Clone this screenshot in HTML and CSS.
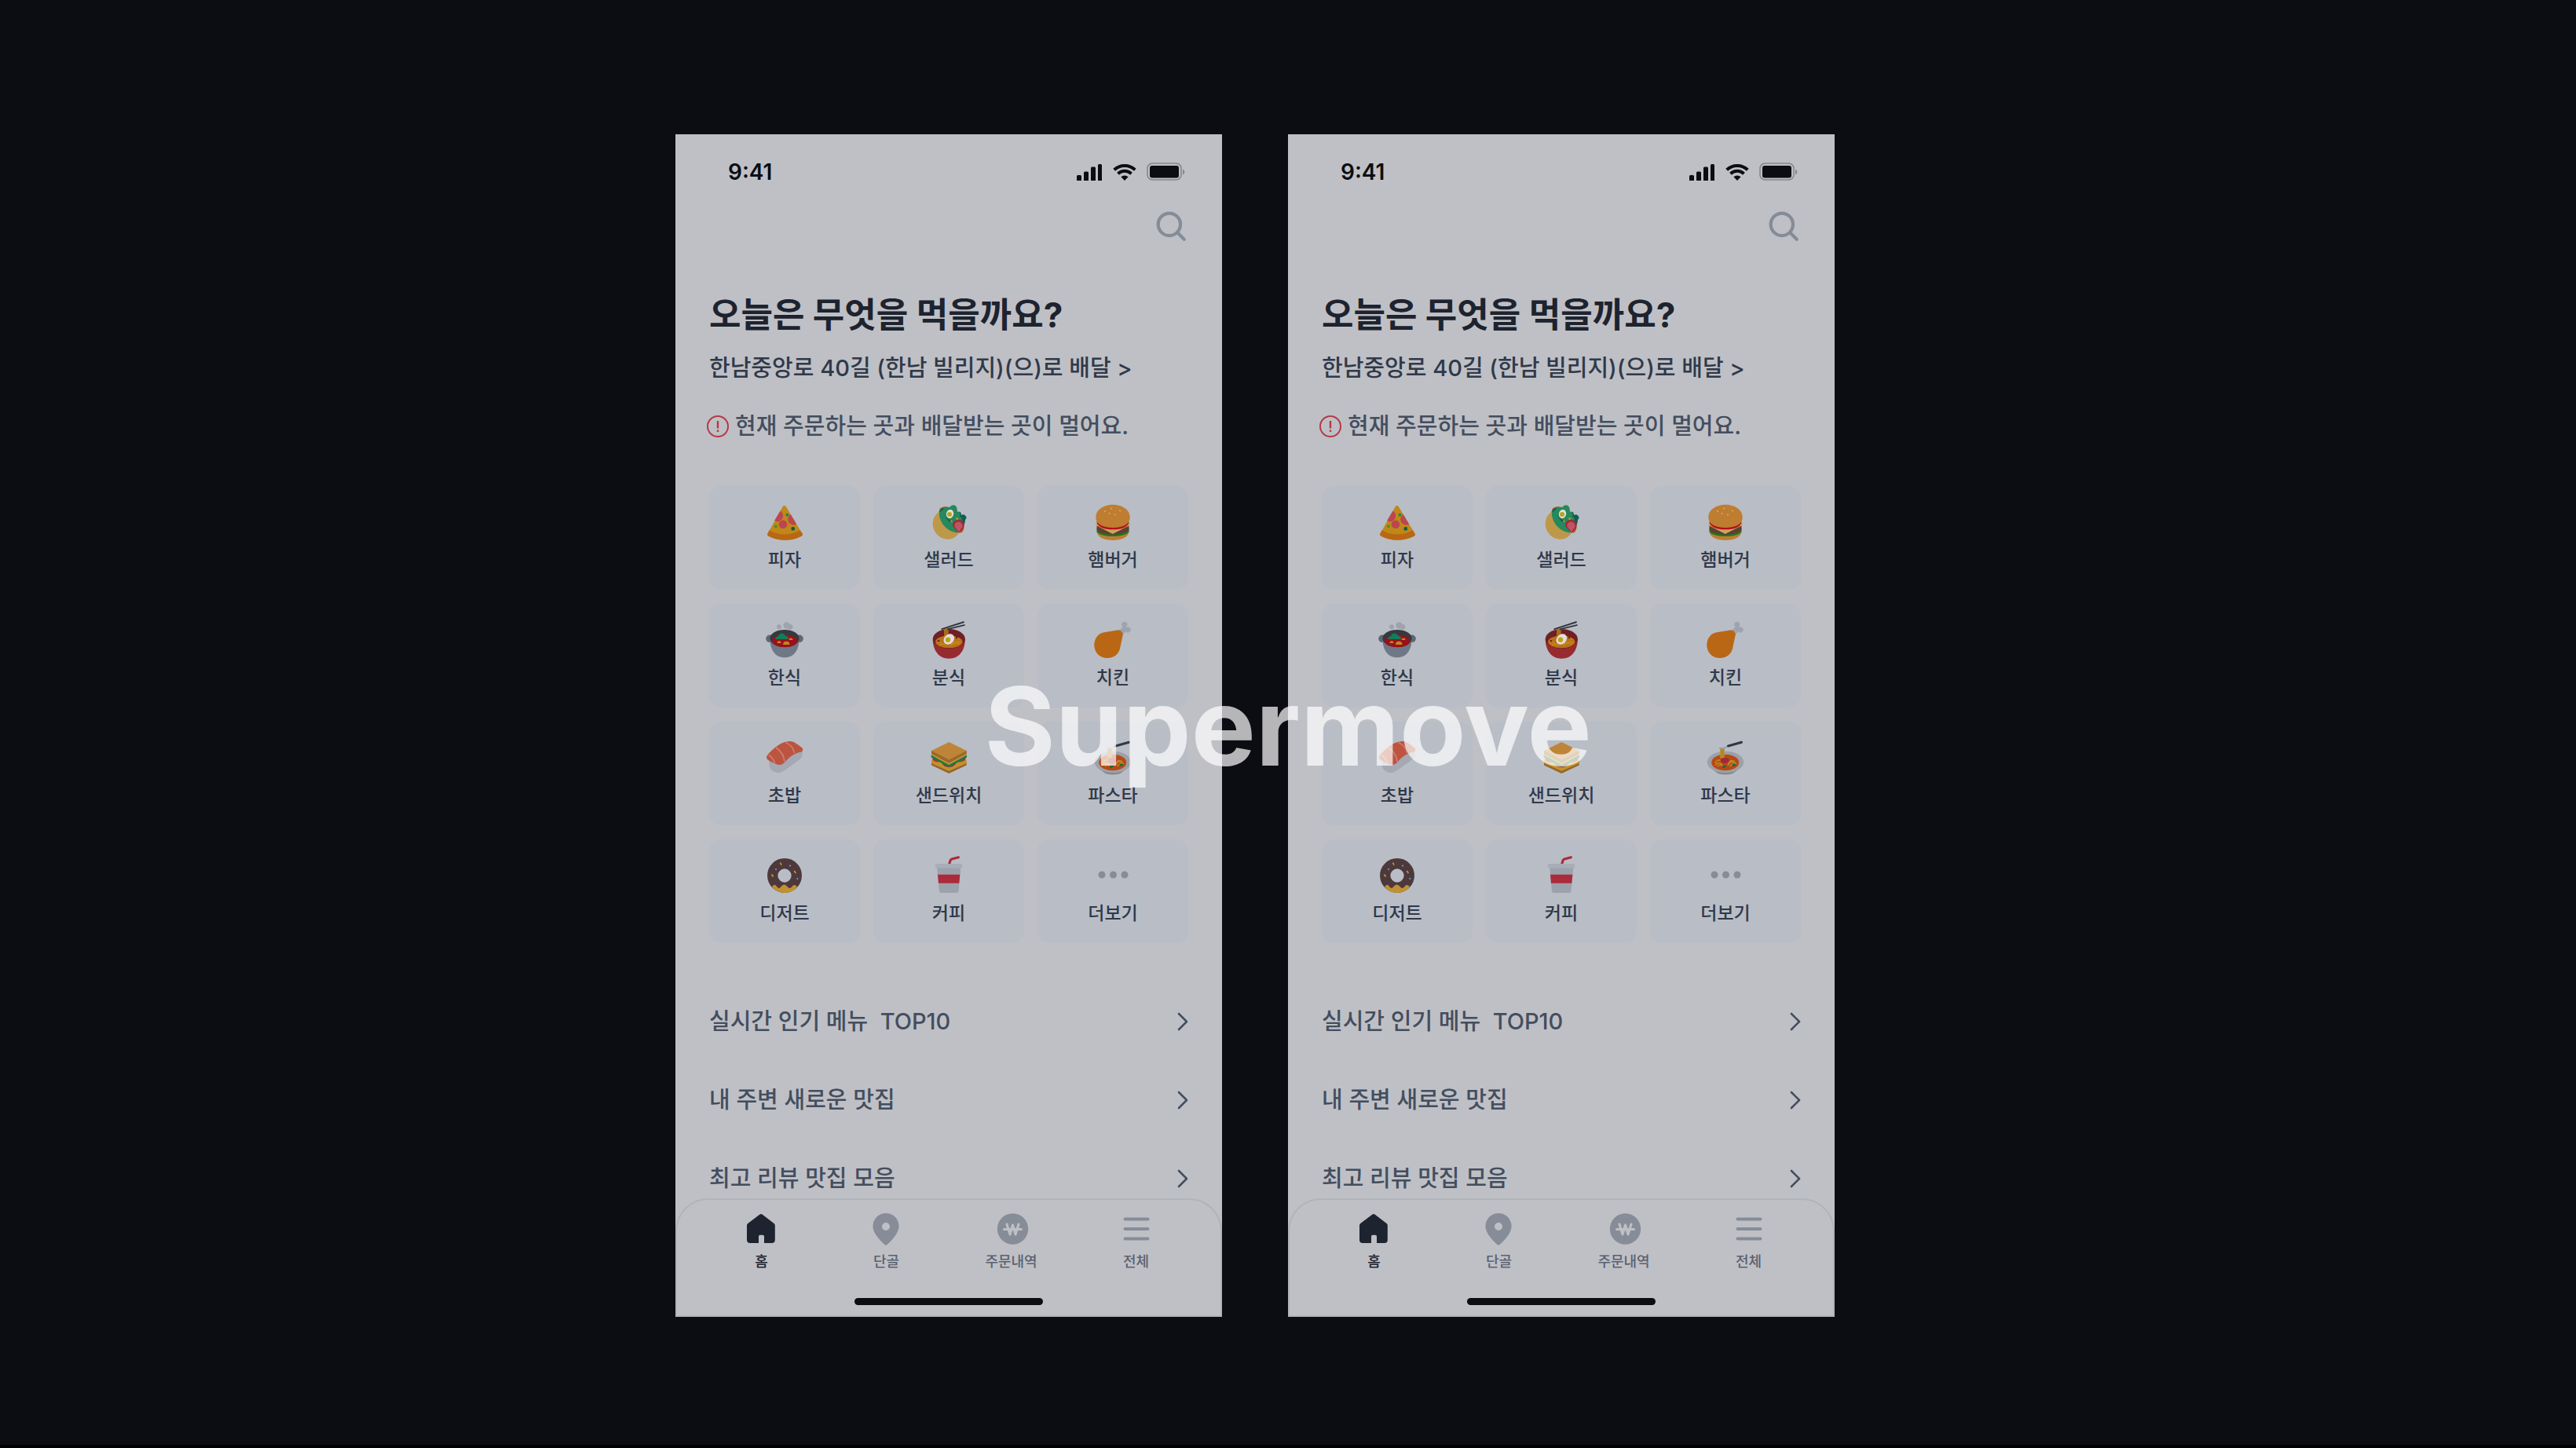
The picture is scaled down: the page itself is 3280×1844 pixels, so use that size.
FILE: index.html
```html
<!DOCTYPE html>
<html lang="ko">
<head>
<meta charset="utf-8">
<meta name="viewport" content="width=device-width, initial-scale=1">
<title>Supermove</title>
<link rel="stylesheet" href="styles.css">
</head>
<body>
<svg class="sprite" aria-hidden="true">
  <symbol id="i-signal" viewBox="0 0 33 22"><path d="M0 16.500a1.500 1.500 0 0 1 1.500-1.500h3a1.500 1.500 0 0 1 1.500 1.500v5.500h-6zM9 12a1.500 1.500 0 0 1 1.500-1.500h3A1.500 1.500 0 0 1 15 12v10H9zM18 6a1.500 1.500 0 0 1 1.500-1.500h3A1.500 1.500 0 0 1 24 6v16h-6zM27 2.500A1.500 1.500 0 0 1 28.500 1h2A1.500 1.500 0 0 1 32 2.500V22h-5z"/></symbol>
  <symbol id="i-wifi" viewBox="0 0 30 22"><path d="M15 22l-4.600-4.700a7 7 0 0 1 9.200 0z"/><path d="M6.500 13.200a12.500 12.500 0 0 1 17 0M1.700 8.200a19.500 19.500 0 0 1 26.600 0" fill="none" stroke="currentColor" stroke-width="4"/></symbol>
  <symbol id="i-battery" viewBox="0 0 50 24"><rect x="1" y="1" width="43" height="21" rx="6.500" fill="none" stroke="#85878c" stroke-width="1.600"/><rect x="4" y="4" width="37" height="15.500" rx="3"/><path d="M46 8.500v7c3-1.200 3-5.800 0-7z" fill="#85878c"/></symbol>
  <symbol id="i-search" viewBox="0 0 40 40"><g fill="none" stroke="currentColor" stroke-width="4" stroke-linecap="round"><circle cx="17" cy="17" r="13.500"/><path d="M27 27l8 8"/></g></symbol>
  <symbol id="i-alert" viewBox="0 0 30 30"><circle cx="15" cy="15" r="13" fill="none" stroke="currentColor" stroke-width="2"/><path d="M13.800 8h2.400v9.500h-2.400zM13.800 19.500h2.400V22h-2.400z"/></symbol>
  <symbol id="i-chevron" viewBox="0 0 14 24"><path d="M2 2l10 10L2 22" fill="none" stroke="currentColor" stroke-width="2.600" stroke-linecap="round" stroke-linejoin="round"/></symbol>

  <symbol id="f-pizza" viewBox="0 0 48 48">
    <path d="M21.500 3.500c1-2 3.500-2 4.500 0L46.500 37.500c.8 1.400.3 2.600-1 3.200-13 6.700-29 6.700-42 0-1.300-.6-1.800-1.800-1-3.200z" fill="#bf8818"/>
    <path d="M14.700 14.900l3.900-6.400a5.300 5.300 0 0 1-7.500 12.600zM31.700 13a5.500 5.500 0 0 0 7.500 12.500z" fill="#bb4650"/><circle cx="22" cy="25.700" r="5.300" fill="#bb4650"/>
    <path d="M4.400 33.300c12 7 27.500 7 39.400 0l2.700 4.200c.8 1.400.3 2.600-1 3.200-13 6.700-29 6.700-42 0-1.300-.6-1.800-1.800-1-3.200z" fill="#b96714"/>
    <rect x="25.500" y="11.700" width="3.800" height="3.800" rx="1.500" fill="#25805a"/><rect x="11" y="26.500" width="3.600" height="3.600" rx="1" fill="#4f8f2a"/><rect x="32.500" y="29" width="4.500" height="4.500" rx="1.500" fill="#125a4c"/>
  </symbol>
  <symbol id="f-salad" viewBox="0 0 48 48">
    <path d="M12 6q4-3.500 9-3l22.500 27q-.5 5-4 7z" fill="#b96714"/>
    <path d="M11.500 10c1-4 6-6.500 9-5l-1 14zM36 10q4-1 4 4 3-1.500 5 .500 3 2.500 0 5.500 0 5-3 8l-9-6-2-12z" fill="#145c50"/>
    <path d="M11.500 10q5-1 7-6 4-1 7 0c2-4.500 9-3.500 9 2q1 2 0 3.500 4-.5 4 3.500l-.500 3q4 1 2.500 6l3 4-9 11q-10 1-18-7.500-6-7-5-19.500z" fill="#26885c"/>
    <path d="M19 15l6 5h5l-5 3z" fill="#145c50"/>
    <path d="M11.500 10c.5 14 10 25 25.500 27-4 5-8 7.700-13.500 7.700C12 44.700 3.700 35.500 3.700 24.700c0-6 3-11.500 7.800-14.700z" fill="#be9849"/>
    <ellipse cx="25.500" cy="12.500" rx="4.600" ry="5.600" transform="rotate(15 25.500 12.500)" fill="#dfe0e0"/><circle cx="25" cy="13" r="3" fill="#c1a116"/>
    <path d="M37 37l-8-9a7.400 7.400 0 1 1 12.500 4.500z" fill="#a3283b"/><path d="M37 36l-5.500-7.500a5 5 0 1 1 8 3z" fill="#bb5561"/>
    <circle cx="34.700" cy="18.500" r="1.500" fill="#a5a51d"/><circle cx="27.500" cy="21.500" r="1.300" fill="#a5a51d"/>
  </symbol>
  <symbol id="f-burger" viewBox="0 0 48 48">
    <path d="M3.500 34h41c0 8-9 12-20.500 12S3.500 42 3.500 34z" fill="#bf7d31"/>
    <path d="M3.500 31h41v4c-4 8-37 8-41 0z" fill="#24751f"/>
    <path d="M3.500 27h41v5c-4 9-37 9-41 0z" fill="#5c4033"/>
    <path d="M2 24.500l4-2h36l4 2c0 2-1 3-2 3.300L23.700 38 4 27.800c-1-.3-2-1.300-2-3.300z" fill="#c9a660"/>
    <path d="M3.500 22h41c0 7-9 10.300-20.500 10.300S3.500 29 3.500 22z" fill="#b80f16"/>
    <path d="M24 .700C36 .700 45.700 7 45.700 17c0 8-8 13-21.700 13S2.300 25 2.300 17C2.300 7 12 .700 24 .700z" fill="#bf7d31"/>
    <g fill="#ceb067"><circle cx="14" cy="9" r="1"/><circle cx="22" cy="5.500" r="1"/><circle cx="33" cy="8.500" r="1"/><circle cx="19.500" cy="12" r="1"/><circle cx="27" cy="13.500" r="1"/></g>
  </symbol>
  <symbol id="f-stew" viewBox="0 0 48 48">
    <g fill="#9ea3ad"><circle cx="17" cy="6.300" r="3"/><circle cx="26.500" cy="4.500" r="4.200"/><circle cx="31" cy="6.300" r="3.400"/></g>
    <g fill="#5e6775"><circle cx="5" cy="21.300" r="4.800"/><circle cx="43" cy="21.300" r="4.800"/></g>
    <path d="M5.300 20h37.400c0 15-6 25.300-18.700 25.300S5.300 35 5.300 20z" fill="#6f7887"/>
    <ellipse cx="24" cy="21" rx="18.700" ry="11" fill="#363a3f"/>
    <ellipse cx="24.300" cy="24.300" rx="16.200" ry="8" fill="#9b101d"/>
    <path d="M12.500 22q-1-3 3-3.500 2-4 5-4t5 3.500q3 0 3.500 2.500.3 1.500-2 1.500z" fill="#107d5b"/>
    <path d="M22 29q0-4.300 4.300-4.300T30.500 29zM29.500 23q0-2.500 2.500-2.500t2.700 2.500zM14.500 27q0-2.700 2.500-2.700t2.500 2.700z" fill="#bf8818"/>
  </symbol>
  <symbol id="f-ramen" viewBox="0 0 48 48">
    <path d="M3.700 21h41.200c0 16-8 25.700-20.600 25.700S3.700 37 3.700 21z" fill="#972b30"/>
    <ellipse cx="24.300" cy="21.500" rx="20.500" ry="12.500" fill="#6f1f25"/>
    <ellipse cx="24.300" cy="25.300" rx="17.200" ry="7.900" fill="#ba7213"/>
    <path d="M9 27q3-3 6 0M12 30q4-4 8 0M26 31q4-6 12-3M27 29q5-6 12-3M33 20q3 0 5 3" fill="none" stroke="#c6922c" stroke-width="1"/>
    <path d="M18.200 8.500h5.300v11h-5.300z" fill="#bd8018"/><path d="M20 9v11M22 9v10" stroke="#7d3c17" stroke-width=".6"/>
    <ellipse cx="24.300" cy="22" rx="7.500" ry="6" transform="rotate(-45 24.300 22)" fill="#dedfe0"/><circle cx="23" cy="22.800" r="3.200" fill="#c1a116"/>
    <circle cx="11" cy="24.300" r="1.300" fill="#6f1f25"/><circle cx="34" cy="20" r="1.300" fill="#6f1f25"/>
    <path d="M14.500 9.300L43.600 0M22 9.300l22.600-5.500" stroke="#33373c" stroke-width="1.900"/>
  </symbol>
  <symbol id="f-chicken" viewBox="0 0 48 48">
    <path d="M32 11.500l4.500-5.500a3.500 3.500 0 1 1 5-.500l-.5 1.800a3.500 3.500 0 1 1-.5 5L36 16.500z" fill="#9ea4ae"/>
    <path d="M31.500 10.300q4.500 1.200 5.300 6L33 34c-2 8-8.500 12-16 12C7 46 .300 38.500.300 29.500c0-8 4.500-15 12.700-16.300z" fill="#b96714"/>
  </symbol>
  <symbol id="f-sushi" viewBox="0 0 48 48">
    <path d="M3.700 24l1 10c1.500 6 8 8.500 12.500 8 3-.4 6-2.500 9-4.500l16-11.500c5-3.500 4.500-8 4.800-12z" fill="#a5a9b4"/>
    <path d="M1 22.500c0-4 15.500-17.500 22-19 5-1.500 9.500-2 12.500-.5 4 2 8.500 5.500 11.500 8q1 3-1.500 4.500C35 17 29 23.500 24.500 28.500c-3 3-6 4-9 3.300C11 30.500 6 28 2.500 25.500Q1 24.500 1 22.500z" fill="#bd543f"/>
    <g fill="none" stroke="#c58073" stroke-width="1.800"><path d="M4 19.500q6 4 7.500 11M13 10q10 7 11 18M25.500 3.500Q35 8 36.500 17"/></g>
  </symbol>
  <symbol id="f-sandwich" viewBox="0 0 48 48">
    <path d="M2 28.500L24.300 19l22.400 9.500v4L24.300 43 2 32.500z" fill="#976529"/>
    <path d="M2 26l22.300-9 22.400 9v4L24.300 40 2 30z" fill="#c2912d"/>
    <path d="M3 24q1 4.500 9 4.500L9 22zM15.500 30q2 5 8.800 5t9-5l-9-6zM36 28.500q9 0 10-5l-6-1z" fill="#a8353a"/>
    <path d="M2 20.500v-5l44.700 0v5L24.300 33z" fill="#c79a36"/>
    <path d="M1.700 19.500l22.600 12.500 22.700-12.500v3L24.300 35 1.700 22.500z" fill="#1c7a3c"/>
    <path d="M2 14h44.700v4L24.300 30 2 18z" fill="#9c682c"/>
    <path d="M24.300 3l22.400 11-22.400 11.500L2 14z" fill="#be8539"/>
  </symbol>
  <symbol id="f-pasta" viewBox="0 0 48 48">
    <path d="M8 37h32q-4 7.500-16 7.500T8 37z" fill="#85888f"/>
    <ellipse cx="24" cy="28.500" rx="23.200" ry="13.700" fill="#9da0a7"/>
    <ellipse cx="23.700" cy="29" rx="17.500" ry="10.300" fill="#b54a16"/>
    <path d="M11 30q3-7 10-2M11 33q4-6 9-1M14 34q2-3 6-1M27 33q4-9 11-2M27 30q4-6 9-2M30 34q2-4 5-3" fill="none" stroke="#c08a20" stroke-width="1.500"/>
    <path d="M17.200 10.500h5.500v13h-5.500z" fill="#be8e27"/><path d="M19 11v12M21 11v12" stroke="#a8751a" stroke-width=".6"/>
    <ellipse cx="23.400" cy="26.500" rx="5.700" ry="3.600" fill="#a3283b"/>
    <path d="M20 34.500q2-2.500 5-1.500-.5 3-5 3zM32.500 31.500q3-1.500 5 .500-2.500 2.500-5 1z" fill="#136a4b"/>
    <path d="M16 11l6.500-.3L27 8" fill="none" stroke="#9a9da5" stroke-width="2"/><path d="M27.500 8L44.500 3.200" stroke="#33373f" stroke-width="3" stroke-linecap="round"/>
  </symbol>
  <symbol id="f-donut" viewBox="0 0 48 48">
    <circle cx="24" cy="23" r="15.300" fill="none" stroke="#4d393c" stroke-width="13.300"/>
    <path d="M8 37.500q3-5 6-.500 3 4 5.500 0 4-5 8 0 3 4 6 0 3-4 6.500.500-6 7.500-16 7.500T8 37.500z" fill="#bf9132"/>
    <path d="M18.500 6.500l1.500 3.200M7.500 21.500l2 3.200M36.300 17l2 3.200" stroke="#c3a12e" stroke-width="1.600"/>
    <g fill="#6aa4b5"><circle cx="31" cy="10.500" r="1.100"/><circle cx="13" cy="15" r="1.100"/><circle cx="40.300" cy="27" r="1.100"/></g>
  </symbol>
  <symbol id="f-coffee" viewBox="0 0 48 48">
    <path d="M24.500 9l1.500-5q.5-1.500 2-2l8.500-2.300" fill="none" stroke="#ab2a3b" stroke-width="3" stroke-linecap="round"/>
    <path d="M9 12h30.400l-2.800 30.500q-.3 2.500-2.600 2.500H14.500q-2.300 0-2.600-2.500z" fill="#9ca2ac"/>
    <rect x="6.700" y="8" width="34.700" height="5.500" rx="2.500" fill="#a8adb8"/>
    <path d="M10 21.700h28.300l-1 11H11z" fill="#ab2a3b"/>
  </symbol>
  <symbol id="f-more" viewBox="0 0 48 48"><g fill="#868d98"><circle cx="10" cy="22" r="4.500"/><circle cx="24.500" cy="22" r="4.500"/><circle cx="39" cy="22" r="4.500"/></g></symbol>

  <symbol id="t-home" viewBox="0 0 44 44"><path d="M19.500 4.500q1.500-1.200 3 0L37.500 16q1.300 1 1.300 2.500V37q0 4-4 4H25V32.500q0-1.800-1.800-1.800h-3.400q-1.800 0-1.800 1.800V41H7q-4 0-4-4V18.500Q3 17 4.300 16z"/></symbol>
  <symbol id="t-pin" viewBox="0 0 44 44"><path fill-rule="evenodd" d="M21 3a16.600 16.600 0 0 1 16.600 16.600c0 8-7.600 17-15.100 23.400q-1.500 1.200-3 0C12 36.600 4.400 27.600 4.400 19.600A16.600 16.600 0 0 1 21 3zm0 12a5 5 0 1 0 0 10 5 5 0 0 0 0-10z"/></symbol>
  <symbol id="t-won" viewBox="0 0 44 44"><circle cx="23.500" cy="23" r="19.700"/><path d="M16 17l4 13L23.500 18l3.500 12 4-13M12.500 23.500h22" fill="none" stroke="#bfc0c5" stroke-width="3" stroke-linecap="round" stroke-linejoin="round"/></symbol>
  <symbol id="t-menu" viewBox="0 0 44 44"><path d="M7.500 10.500h29M7.500 23h29M7.500 35.500h29" stroke="currentColor" stroke-width="4" stroke-linecap="round"/></symbol>
</svg>

<main class="page">
  <div class="stage">
    <section class="phone" aria-label="홈 화면 1">
      <header class="status">
        <time class="clock">9:41</time>
        <div class="indicators"><svg class="signal"><use href="#i-signal"/></svg><svg class="wifi"><use href="#i-wifi"/></svg><svg class="battery"><use href="#i-battery"/></svg></div>
      </header>
      <div class="toolbar"><button class="search" type="button" aria-label="검색"><svg><use href="#i-search"/></svg></button></div>
      <div class="intro">
        <h1>오늘은 무엇을 먹을까요?</h1>
        <a class="address" href="#">한남중앙로 40길 (한남 빌리지)(으)로 배달 &gt;</a>
        <p class="notice"><svg><use href="#i-alert"/></svg>현재 주문하는 곳과 배달받는 곳이 멀어요.</p>
      </div>
      <ul class="categories">
        <li><a href="#"><svg><use href="#f-pizza"/></svg>피자</a></li>
        <li><a href="#"><svg><use href="#f-salad"/></svg>샐러드</a></li>
        <li><a href="#"><svg><use href="#f-burger"/></svg>햄버거</a></li>
        <li><a href="#"><svg><use href="#f-stew"/></svg>한식</a></li>
        <li><a href="#"><svg><use href="#f-ramen"/></svg>분식</a></li>
        <li><a href="#"><svg><use href="#f-chicken"/></svg>치킨</a></li>
        <li><a href="#"><svg><use href="#f-sushi"/></svg>초밥</a></li>
        <li><a href="#"><svg><use href="#f-sandwich"/></svg>샌드위치</a></li>
        <li><a href="#"><svg><use href="#f-pasta"/></svg>파스타</a></li>
        <li><a href="#"><svg><use href="#f-donut"/></svg>디저트</a></li>
        <li><a href="#"><svg><use href="#f-coffee"/></svg>커피</a></li>
        <li><a href="#"><svg><use href="#f-more"/></svg>더보기</a></li>
      </ul>
      <ul class="links">
        <li><a href="#">실시간 인기 메뉴 &nbsp;TOP10<svg><use href="#i-chevron"/></svg></a></li>
        <li><a href="#">내 주변 새로운 맛집<svg><use href="#i-chevron"/></svg></a></li>
        <li><a href="#">최고 리뷰 맛집 모음<svg><use href="#i-chevron"/></svg></a></li>
      </ul>
      <footer class="dock">
        <nav class="tabs">
          <a class="tab current" href="#"><svg><use href="#t-home"/></svg>홈</a>
          <a class="tab" href="#"><svg><use href="#t-pin"/></svg>단골</a>
          <a class="tab" href="#"><svg><use href="#t-won"/></svg>주문내역</a>
          <a class="tab" href="#"><svg><use href="#t-menu"/></svg>전체</a>
        </nav>
        <div class="home-bar"></div>
      </footer>
    </section>

    <section class="phone" aria-label="홈 화면 2">
      <header class="status">
        <time class="clock">9:41</time>
        <div class="indicators"><svg class="signal"><use href="#i-signal"/></svg><svg class="wifi"><use href="#i-wifi"/></svg><svg class="battery"><use href="#i-battery"/></svg></div>
      </header>
      <div class="toolbar"><button class="search" type="button" aria-label="검색"><svg><use href="#i-search"/></svg></button></div>
      <div class="intro">
        <h1>오늘은 무엇을 먹을까요?</h1>
        <a class="address" href="#">한남중앙로 40길 (한남 빌리지)(으)로 배달 &gt;</a>
        <p class="notice"><svg><use href="#i-alert"/></svg>현재 주문하는 곳과 배달받는 곳이 멀어요.</p>
      </div>
      <ul class="categories">
        <li><a href="#"><svg><use href="#f-pizza"/></svg>피자</a></li>
        <li><a href="#"><svg><use href="#f-salad"/></svg>샐러드</a></li>
        <li><a href="#"><svg><use href="#f-burger"/></svg>햄버거</a></li>
        <li><a href="#"><svg><use href="#f-stew"/></svg>한식</a></li>
        <li><a href="#"><svg><use href="#f-ramen"/></svg>분식</a></li>
        <li><a href="#"><svg><use href="#f-chicken"/></svg>치킨</a></li>
        <li><a href="#"><svg><use href="#f-sushi"/></svg>초밥</a></li>
        <li><a href="#"><svg><use href="#f-sandwich"/></svg>샌드위치</a></li>
        <li><a href="#"><svg><use href="#f-pasta"/></svg>파스타</a></li>
        <li><a href="#"><svg><use href="#f-donut"/></svg>디저트</a></li>
        <li><a href="#"><svg><use href="#f-coffee"/></svg>커피</a></li>
        <li><a href="#"><svg><use href="#f-more"/></svg>더보기</a></li>
      </ul>
      <ul class="links">
        <li><a href="#">실시간 인기 메뉴 &nbsp;TOP10<svg><use href="#i-chevron"/></svg></a></li>
        <li><a href="#">내 주변 새로운 맛집<svg><use href="#i-chevron"/></svg></a></li>
        <li><a href="#">최고 리뷰 맛집 모음<svg><use href="#i-chevron"/></svg></a></li>
      </ul>
      <footer class="dock">
        <nav class="tabs">
          <a class="tab current" href="#"><svg><use href="#t-home"/></svg>홈</a>
          <a class="tab" href="#"><svg><use href="#t-pin"/></svg>단골</a>
          <a class="tab" href="#"><svg><use href="#t-won"/></svg>주문내역</a>
          <a class="tab" href="#"><svg><use href="#t-menu"/></svg>전체</a>
        </nav>
        <div class="home-bar"></div>
      </footer>
    </section>
  </div>
  <p class="wordmark">Supermove</p>
</main>
</body>
</html>
```
FILE: styles.css
```css
:root {
  --night: #0b0d12;
  --screen: #bfc0c5;
  --tile: #b9bdc6;
  --ink: #1d232f;
  --text: #2f394a;
  --muted: #434e5f;
  --icon: #868d98;
}

* { box-sizing: border-box; }

body {
  margin: 0;
  background: #000;
  color: var(--text);
  font-family: Inter, "Noto Sans CJK KR", sans-serif;
  font-weight: 500;
}

h1, p, ul { margin: 0; padding: 0; }
ul { list-style: none; }
a { color: inherit; text-decoration: none; }
svg { display: block; flex: none; fill: currentColor; overflow: visible; }
symbol { overflow: visible; }

.sprite { position: absolute; width: 0; height: 0; }

.page {
  position: relative;
  display: flex;
  justify-content: center;
  padding: 171px 84px 163px 0;
  border-bottom: 4px solid #000;
  background: var(--night);
}

.stage {
  display: grid;
  grid-template-columns: repeat(2, minmax(0, 1fr));
  gap: 84px;
  width: 100%;
  max-width: 1476px;
}

.phone {
  display: flex;
  flex-direction: column;
  background: var(--screen);
}

.status {
  display: flex;
  align-items: center;
  justify-content: space-between;
  padding: 30px 46px 0 67px;
  color: #0b0d12;
}
.clock { font-size: 28px; font-weight: 600; line-height: 36px; }
.indicators { display: flex; align-items: center; gap: 13px; }
.signal { width: 33px; height: 22px; }
.wifi { width: 30px; height: 22px; }
.battery { width: 50px; height: 24px; }

.toolbar {
  display: flex;
  justify-content: flex-end;
  padding: 31px 43px 0;
}
.search {
  padding: 0;
  border: 0;
  background: none;
  color: #848c98;
}
.search svg { width: 42px; height: 42px; }

.intro {
  display: flex;
  flex-direction: column;
  align-items: flex-start;
  padding: 61px 43px 0;
}
.intro h1 { color: var(--ink); font-size: 44px; font-weight: 700; line-height: 60px; }
.address { margin-top: 18px; font-size: 29px; line-height: 40px; }
.notice {
  display: flex;
  align-items: center;
  gap: 7px;
  margin: 34px 0 0 -4px;
  color: var(--muted);
  font-size: 29px;
  line-height: 40px;
}
.notice svg { width: 30px; height: 30px; color: #b53a48; }

.categories {
  display: grid;
  grid-template-columns: repeat(3, minmax(0, 1fr));
  gap: 18px 17px;
  padding: 56px 43px 0;
}
.categories a {
  display: flex;
  flex-direction: column;
  align-items: center;
  gap: 9px;
  padding: 23px 0 24px;
  border-radius: 15px;
  background: var(--tile);
  font-size: 23px;
  line-height: 28px;
}
.categories svg { width: 48px; height: 48px; }

.links { padding: 50px 43px 0; }
.links a {
  display: flex;
  align-items: center;
  justify-content: space-between;
  color: var(--muted);
  font-size: 29px;
  line-height: 100px;
}
.links svg { width: 14px; height: 24px; }

.dock {
  margin-top: -25px;
  padding: 14px 28px 13px;
  border: 2px solid #b0b4b9;
  border-radius: 42px 42px 0 0;
  background: var(--screen);
}
.tabs { display: grid; grid-template-columns: repeat(4, minmax(0, 1fr)); }
.tab {
  display: flex;
  flex-direction: column;
  align-items: center;
  gap: 9px;
  color: #596273;
  font-size: 18px;
  line-height: 24px;
}
.tab svg { width: 44px; height: 44px; color: var(--icon); }
.tab.current, .tab.current svg { color: var(--ink); }
.home-bar {
  width: 240px;
  height: 9px;
  margin: 34px auto 0;
  border-radius: 5px;
  background: #0b0d12;
}

.wordmark {
  position: absolute;
  inset: 840px 0 auto;
  color: rgba(255, 255, 255, 0.7);
  font-size: 138px;
  font-weight: 700;
  line-height: 170px;
  text-align: center;
}
```
